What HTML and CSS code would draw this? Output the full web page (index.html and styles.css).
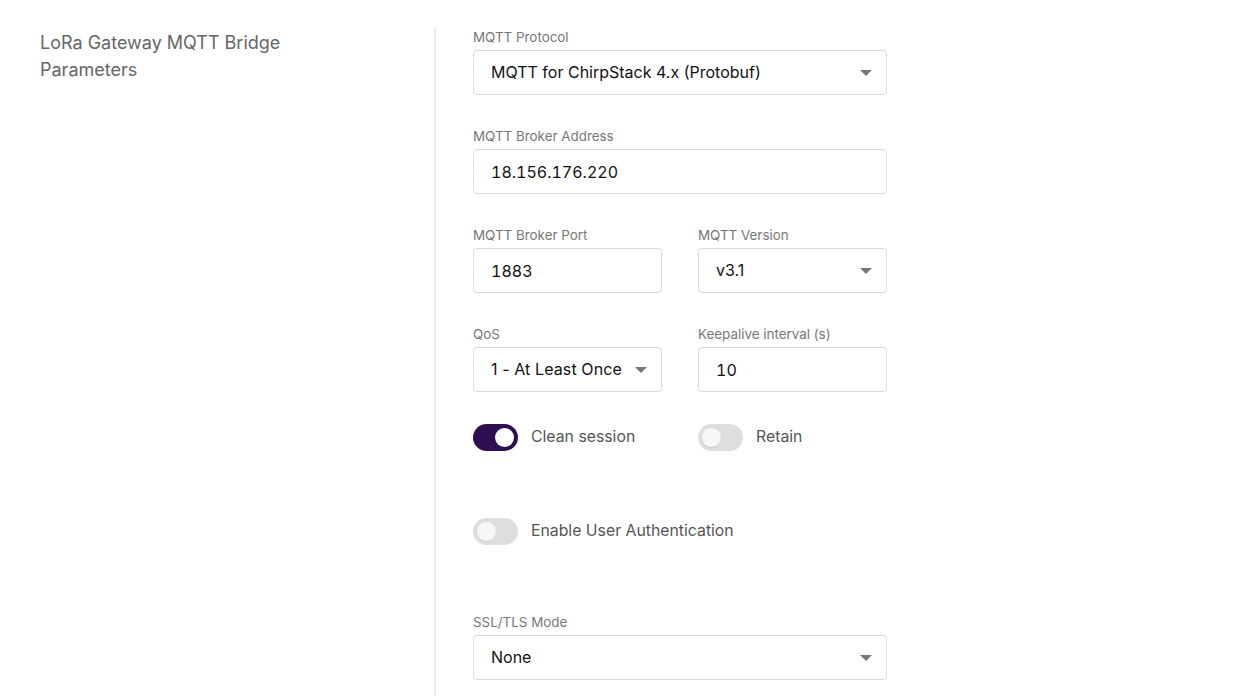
FILE: index.html
```html
<!DOCTYPE html>
<html>
<head>
<meta charset="utf-8">
<link rel="stylesheet" href="styles.css">
</head>
<body>
<div class="page">
  <div class="side">
    <h2 class="side-title">LoRa Gateway MQTT Bridge Parameters</h2>
  </div>
  <div class="form">
    <div class="field">
      <div class="label">MQTT Protocol</div>
      <div class="box select"><span>MQTT for ChirpStack 4.x (Protobuf)</span><i class="caret"></i></div>
    </div>
    <div class="field">
      <div class="label">MQTT Broker Address</div>
      <div class="box"><span class="num">18.156.176.220</span></div>
    </div>
    <div class="row">
      <div class="field">
        <div class="label">MQTT Broker Port</div>
        <div class="box"><span class="num">1883</span></div>
      </div>
      <div class="field">
        <div class="label">MQTT Version</div>
        <div class="box select"><span>v3.1</span><i class="caret"></i></div>
      </div>
    </div>
    <div class="row">
      <div class="field">
        <div class="label">QoS</div>
        <div class="box select"><span class="qos">1 - At Least Once</span><i class="caret"></i></div>
      </div>
      <div class="field">
        <div class="label">Keepalive interval (s)</div>
        <div class="box"><span class="num">10</span></div>
      </div>
    </div>
    <div class="row toggles">
      <div class="toggle-item"><span class="switch on"><span class="knob"></span></span><span class="tlabel">Clean session</span></div>
      <div class="toggle-item"><span class="switch"><span class="knob"></span></span><span class="tlabel">Retain</span></div>
    </div>
    <div class="row toggles auth">
      <div class="toggle-item"><span class="switch"><span class="knob"></span></span><span class="tlabel">Enable User Authentication</span></div>
    </div>
    <div class="field ssl">
      <div class="label">SSL/TLS Mode</div>
      <div class="box select"><span>None</span><i class="caret"></i></div>
    </div>
  </div>
</div>
</body>
</html>
```

FILE: styles.css
```css
html, body {
  margin: 0;
  padding: 0;
  background: #fff;
  font-family: Inter, "Noto Sans", sans-serif;
}
.page {
  display: flex;
  padding-top: 28px;
  height: 668px;
  overflow: hidden;
}
.side {
  width: 434px;
  padding-left: 40px;
  box-sizing: border-box;
  flex: none;
}
.side-title {
  margin: 0;
  padding-top: 1px;
  font-weight: 400;
  font-size: 18px;
  line-height: 27px;
  color: #666;
  width: 260px;
}
.form {
  border-left: 2px solid #ececec;
  padding-left: 37px;
  width: 414px;
}
.field {
  margin-bottom: 32px;
}
.label {
  font-size: 13.4px;
  line-height: 18px;
  color: #777;
  margin-bottom: 4px;
}
.box {
  height: 45px;
  box-sizing: border-box;
  border: 1px solid #dcdcdc;
  border-radius: 4px;
  display: flex;
  align-items: center;
  padding: 0 14px 0 17px;
  font-size: 16px;
  color: #111;
}
.box span {
  flex: 1;
  white-space: nowrap;
  margin-top: -1px;
}
.box .num {
  font-variant-numeric: tabular-nums;
  margin-top: 1px;
}
.box .qos {
  letter-spacing: 0.1px;
}
.caret {
  width: 0;
  height: 0;
  border-left: 6px solid transparent;
  border-right: 6px solid transparent;
  border-top: 6px solid #777;
}
.row {
  display: flex;
  gap: 36px;
}
.row .field {
  flex: 1;
}
.toggles {
  height: 27px;
  margin-bottom: 67px;
}
.toggles.auth {
  margin-bottom: 68px;
}
.toggle-item {
  flex: 1;
  display: flex;
  align-items: center;
}
.switch {
  width: 45px;
  height: 27px;
  border-radius: 14px;
  background: #dedede;
  position: relative;
  flex: none;
  margin-right: 13px;
}
.switch .knob {
  position: absolute;
  top: 4px;
  left: 4px;
  width: 19px;
  height: 19px;
  border-radius: 50%;
  background: #f7f7f7;
  box-shadow: 0 1px 1px rgba(0,0,0,0.08);
}
.switch.on {
  background: #2e0f52;
}
.switch.on .knob {
  left: 22px;
  background: #fff;
}
.tlabel {
  font-size: 15.8px;
  color: #555;
  margin-top: -2px;
}
```
